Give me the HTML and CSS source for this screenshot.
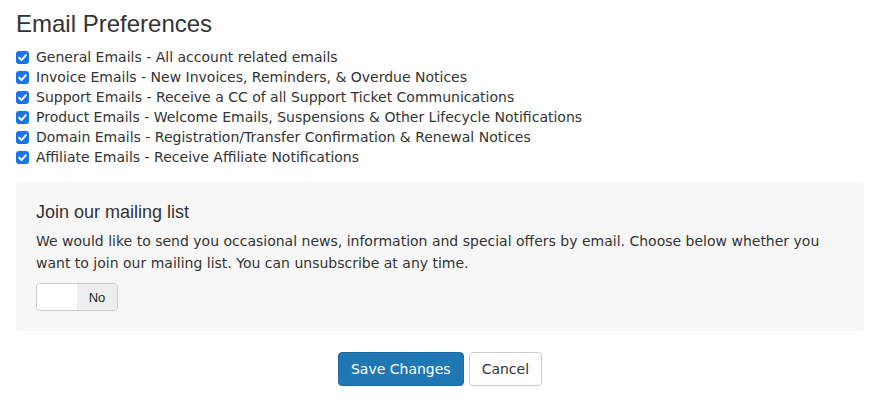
FILE: index.html
```html
<!DOCTYPE html>
<html>
<head>
<meta charset="utf-8">
<link rel="stylesheet" href="styles.css">
</head>
<body>
<div class="page">
  <h2 class="title">Email Preferences</h2>
  <div class="checks">
    <label class="check"><span class="box"><svg viewBox="0 0 13 13" width="13" height="13"><path d="M3.2 6.8 L5.5 9.1 L9.9 4.2" fill="none" stroke="#fff" stroke-width="2" stroke-linecap="round" stroke-linejoin="round"/></svg></span>General Emails - All account related emails</label>
    <label class="check"><span class="box"><svg viewBox="0 0 13 13" width="13" height="13"><path d="M3.2 6.8 L5.5 9.1 L9.9 4.2" fill="none" stroke="#fff" stroke-width="2" stroke-linecap="round" stroke-linejoin="round"/></svg></span>Invoice Emails - New Invoices, Reminders, &amp; Overdue Notices</label>
    <label class="check"><span class="box"><svg viewBox="0 0 13 13" width="13" height="13"><path d="M3.2 6.8 L5.5 9.1 L9.9 4.2" fill="none" stroke="#fff" stroke-width="2" stroke-linecap="round" stroke-linejoin="round"/></svg></span>Support Emails - Receive a CC of all Support Ticket Communications</label>
    <label class="check"><span class="box"><svg viewBox="0 0 13 13" width="13" height="13"><path d="M3.2 6.8 L5.5 9.1 L9.9 4.2" fill="none" stroke="#fff" stroke-width="2" stroke-linecap="round" stroke-linejoin="round"/></svg></span>Product Emails - Welcome Emails, Suspensions &amp; Other Lifecycle Notifications</label>
    <label class="check"><span class="box"><svg viewBox="0 0 13 13" width="13" height="13"><path d="M3.2 6.8 L5.5 9.1 L9.9 4.2" fill="none" stroke="#fff" stroke-width="2" stroke-linecap="round" stroke-linejoin="round"/></svg></span>Domain Emails - Registration/Transfer Confirmation &amp; Renewal Notices</label>
    <label class="check"><span class="box"><svg viewBox="0 0 13 13" width="13" height="13"><path d="M3.2 6.8 L5.5 9.1 L9.9 4.2" fill="none" stroke="#fff" stroke-width="2" stroke-linecap="round" stroke-linejoin="round"/></svg></span>Affiliate Emails - Receive Affiliate Notifications</label>
  </div>
  <div class="well">
    <h4 class="well-title">Join our mailing list</h4>
    <p class="well-text">We would like to send you occasional news, information and special offers by email. Choose below whether you want to join our mailing list. You can unsubscribe at any time.</p>
    <div class="toggle"><span class="toggle-knob"></span><span class="toggle-label">No</span></div>
  </div>
  <div class="actions">
    <button class="btn btn-primary">Save Changes</button>
    <button class="btn btn-default">Cancel</button>
  </div>
</div>
</body>
</html>
```
FILE: styles.css
```css
html, body { margin: 0; padding: 0; background: #fff; }
body { font-family: "DejaVu Sans", Verdana, sans-serif; font-size: 14px; color: #333; }
.page { padding: 0 17px 0 16px; }
.title { font-family: "Liberation Sans", Arial, sans-serif; font-weight: normal; font-size: 24px; line-height: 26px; margin: 11px 0 10px; color: #333; }
.checks { display: flex; flex-direction: column; }
.check { display: flex; align-items: center; height: 20px; font-size: 14px; }
.box { width: 13px; height: 13px; border-radius: 3px; background: #1a73e8; margin-right: 7px; display: flex; }
.well { margin-top: 15px; background: #f7f7f7; border-radius: 4px; padding: 20px; }
.well-title { font-family: "Liberation Sans", Arial, sans-serif; font-weight: normal; font-size: 18px; line-height: 20px; margin: 0 0 8px; color: #333; }
.well-text { margin: 0 0 9px; line-height: 22px; font-size: 14px; }
.toggle { box-sizing: border-box; display: flex; width: 82px; height: 28px; border: 1px solid #ccc; border-radius: 4px; overflow: hidden; }
.toggle-knob { width: 40px; background: #fff; }
.toggle-label { flex: 1; background: #eee; font-family: "Liberation Sans", Arial, sans-serif; font-size: 13px; display: flex; align-items: center; justify-content: center; color: #222; }
.actions { display: flex; justify-content: center; gap: 5px; margin-top: 21px; }
.btn { font-family: "DejaVu Sans", Verdana, sans-serif; font-size: 14px; height: 34px; padding: 0 12px; border-radius: 4px; cursor: pointer; }
.btn-primary { background: #2077b4; border: 1px solid #1c6aa1; color: #fff; }
.btn-default { background: #fff; border: 1px solid #ccc; color: #333; }
```
